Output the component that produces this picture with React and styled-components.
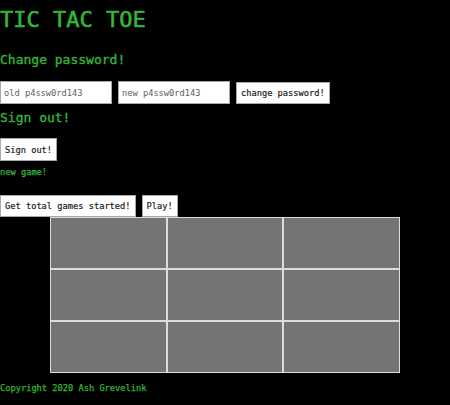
import React from "react";
import styled, { createGlobalStyle } from "styled-components";

const GREEN = "#35b535";

const GlobalStyle = createGlobalStyle`
  html, body {
    margin: 0;
    padding: 0;
    background: #000;
  }
  body {
    font-family: "DejaVu Sans Mono", "Liberation Mono", monospace;
    color: ${GREEN};
  }
`;

const Page = styled.div`
  padding-top: 7px;
  min-height: 405px;
  box-sizing: border-box;
`;

const Title = styled.h1`
  margin: 0;
  font-size: 22px;
  line-height: 26px;
  font-weight: normal;
  -webkit-text-stroke: 0.6px ${GREEN};
`;

const Heading = styled.h2`
  margin: ${(p) => p.$top}px 0 0;
  font-size: 13px;
  line-height: 16px;
  font-weight: normal;
  -webkit-text-stroke: 0.35px ${GREEN};
`;

const Row = styled.div`
  display: flex;
  align-items: center;
  gap: 6px;
  margin-top: ${(p) => p.$top}px;
`;

const Input = styled.input`
  box-sizing: border-box;
  width: 112px;
  height: 23px;
  margin: 0;
  padding: 0 3px;
  border: 1px solid #a8a8a8;
  background: #fff;
  font-family: "DejaVu Sans Mono", monospace;
  font-size: 8.7px;
  color: #333;
  outline: none;

  &::placeholder {
    color: #5e5e5e;
  }
`;

const Button = styled.button`
  box-sizing: border-box;
  height: ${(p) => p.$h ?? 22}px;
  margin: 0;
  padding: 0 4px;
  border: 1px solid #a8a8a8;
  background: #fff;
  color: #1e1e1e;
  font-family: "DejaVu Sans Mono", monospace;
  font-size: 8.7px;
  -webkit-text-stroke: 0.2px #1e1e1e;
  cursor: pointer;
`;

const Note = styled.p`
  margin: ${(p) => p.$top}px 0 0;
  font-size: 8.7px;
  line-height: 11px;
  -webkit-text-stroke: 0.25px ${GREEN};
`;

const Board = styled.div`
  display: grid;
  grid-template-columns: repeat(3, 1fr);
  grid-template-rows: repeat(3, 52px);
  width: 350px;
  margin: 0 auto;
`;

const Cell = styled.div`
  background: #747474;
  border: 1px solid #dcdcdc;
`;

export default function App() {
  return (
    <Page>
      <GlobalStyle />
      <Title>TIC TAC TOE</Title>
      <Heading $top={19}>Change password!</Heading>
      <Row $top={13}>
        <Input placeholder="old p4ssw0rd143" />
        <Input placeholder="new p4ssw0rd143" />
        <Button>change password!</Button>
      </Row>
      <Heading $top={6}>Sign out!</Heading>
      <Row $top={12}>
        <Button $h={23}>Sign out!</Button>
      </Row>
      <Note $top={6}>new game!</Note>
      <Row $top={17}>
        <Button>Get total games started!</Button>
        <Button>Play!</Button>
      </Row>
      <Board>
        {Array.from({ length: 9 }, (_, i) => (
          <Cell key={i} />
        ))}
      </Board>
      <Note $top={10}>Copyright 2020 Ash Grevelink</Note>
    </Page>
  );
}
